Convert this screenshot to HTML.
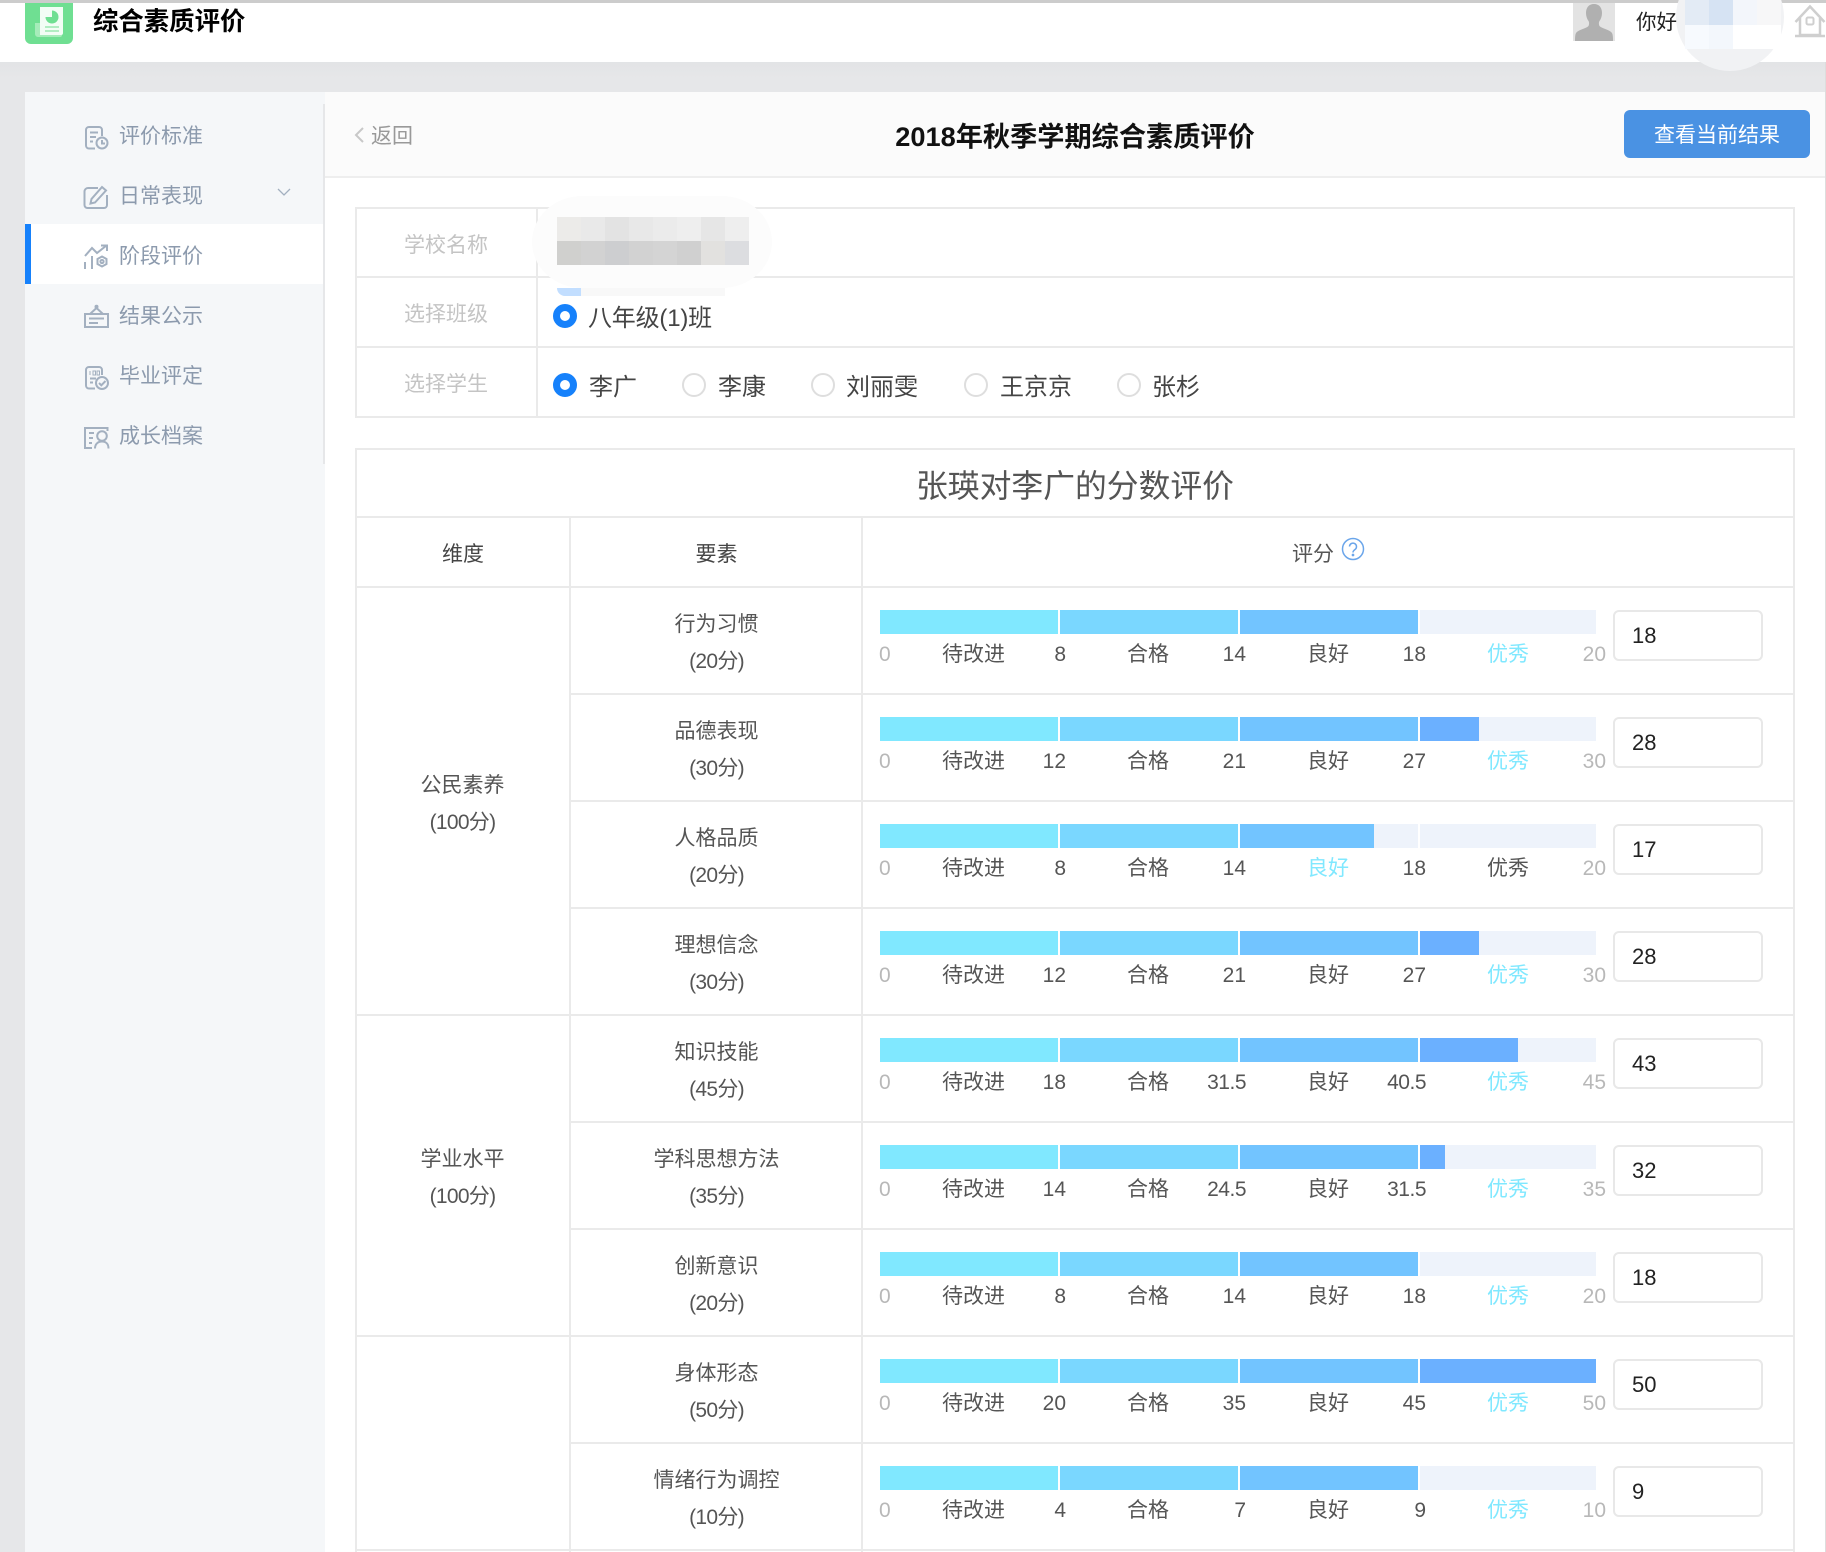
<!DOCTYPE html>
<html lang="zh-CN"><head><meta charset="utf-8"><title>综合素质评价</title>
<style>
*{margin:0;padding:0;box-sizing:border-box}
html,body{width:1826px;height:1552px;overflow:hidden}
body{position:relative;background:#e6e7e9;font-family:"Liberation Sans","Noto Sans CJK SC",sans-serif;font-size:21px;color:#555}
div,span,svg,p,i{position:absolute;display:block}
.t{white-space:nowrap;line-height:30px;height:30px}
.g{background:#eaeaea}
.sb{left:119px;color:#8c9aad;width:90px}
.lb{left:355px;width:182px;text-align:center;color:#c4c4c4}
.rt{color:#444;font-size:24px;line-height:34px;height:34px;white-space:nowrap}
.rd{width:24px;height:24px;border-radius:50%;border:2px solid #dedede;background:#fff}
.rd.on{border:7px solid #1681fb}
.r{left:355px;top:0;width:1440px;height:107px}
.e{left:215px;width:293px;text-align:center;line-height:37px;top:19px;color:#555;letter-spacing:-.7px}
.e::first-line,.dm::first-line{letter-spacing:0}
.dm{left:355px;width:215px;text-align:center;line-height:37px;letter-spacing:-.7px}
.s{top:23px;height:24px;background:#eef3fb}
.s1{left:525px;width:178px}.s2{left:705px;width:178px}.s3{left:885px;width:178px}.s4{left:1065px;width:176px}
.f{left:0;top:0;height:24px}
.c1{background:#80e8ff}.c2{background:#7ad7ff}.c3{background:#72c4ff}.c4{background:#6bb0ff}
.l{top:53px;height:30px;line-height:30px;white-space:nowrap;color:#555}
.n0{left:524px;color:#b8b8b8}
.a{left:587px}.b{left:772px}.c{left:952px}.d{left:1132px;color:#80e8ff}
.d.k{color:#555}.c.h{color:#80e8ff}
.x1,.x2,.x3,.x4{text-align:right;width:60px}
.x1{left:651px}.x2{left:831px}.x3{left:1011px}.x4{left:1191px;color:#b8b8b8}
.in{left:1258px;top:23px;width:150px;height:51px;border:2px solid #e8e8e8;border-radius:6px;background:#fff;color:#222;font-size:22px;line-height:47px;padding-left:17px}
.m{top:217px;width:24px;height:24px}
.m2{top:241px;width:24px;height:24px}
</style></head><body>

<!-- header -->
<div style="left:0;top:0;width:1826px;height:78px;background:linear-gradient(#d4d5d8,#e6e7e9)"></div>
<div style="left:0;top:0;width:1826px;height:62px;background:#fff;border-top:3px solid #ccc"></div>
<svg style="left:25px;top:3px" width="48" height="41" viewBox="0 0 48 41"><path d="M0 0H48V35a6 6 0 0 1-6 6H6a6 6 0 0 1-6-6Z" fill="#6fdf92"/><path d="M10 20h5V32h22a2 2 0 0 1-2 2H13a3 3 0 0 1-3-3Z" fill="#a6ecba"/><path d="M15 4H38V30a2 2 0 0 1-2 2H15Z" fill="#f2fdf5"/><circle cx="27" cy="14" r="6.500" fill="#6fdf92"/><path d="M27 14V7a7 7 0 0 0-7 7Z" fill="#f2fdf5"/><path d="M20 24H34M20 28H34" stroke="#9be8b2" stroke-width="1.500"/></svg>
<div class="t" style="left:93px;top:7px;font-size:25.400px;font-weight:700;color:#000">综合素质评价</div>
<div style="left:1676px;top:-37px;width:108px;height:108px;border-radius:50%;background:#f1f2f4"></div>
<div style="left:1685px;top:0;width:24px;height:25px;background:#e3ebf5"></div>
<div style="left:1709px;top:0;width:24px;height:25px;background:#d6e3f3"></div>
<div style="left:1733px;top:0;width:24px;height:25px;background:#f3f6fb"></div>
<div style="left:1757px;top:0;width:24px;height:25px;background:#f7f7f8"></div>
<div style="left:1685px;top:25px;width:24px;height:24px;background:#f7fafe"></div>
<div style="left:1709px;top:25px;width:24px;height:24px;background:#f3f7fc"></div>
<div style="left:1733px;top:25px;width:48px;height:24px;background:#fff"></div>
<svg style="left:1573px;top:3px" width="42" height="38" viewBox="0 0 42 38"><rect width="42" height="38" fill="#e3e3e3"/><path d="M21 1c-5.500 0-8 4-8 9 0 3 1 6 2.500 8 .8 1 .8 3.500 0 5-2 2.500-10 3.500-12.500 7C2 32 2 35 2 38H40c0-3 0-6-1-8-2.500-3.500-10.500-4.500-12.500-7-.8-1.500-.8-4 0-5C28 16 29 13 29 10c0-5-2.500-9-8-9Z" fill="#b0b0b0"/></svg>
<div class="t" style="left:1636px;top:8px;font-size:20.500px;color:#222">你好</div>
<svg style="left:1794px;top:3px" width="32" height="35" viewBox="0 0 32 35" fill="none" stroke="#cfcfcf" stroke-width="2.500"><path d="M1.500 19L16 3.500 30.500 19"/><path d="M6 15V32H26V15"/><path d="M1 33H31"/><rect x="12.500" y="14.500" width="7" height="7" rx="1.500" stroke-width="2"/></svg>

<!-- sidebar -->
<div style="left:25px;top:92px;width:300px;height:1460px;background:#f5f7f9"></div>
<div style="left:25px;top:224px;width:298px;height:60px;background:#fff"></div>
<div style="left:25px;top:224px;width:6px;height:60px;background:#1681fb"></div>
<div style="left:323px;top:104px;width:2px;height:360px;background:#e6e7e9"></div>

<svg style="left:82px;top:123px" width="30" height="30" viewBox="0 0 30 30" fill="none" stroke="#a3b0c0" stroke-width="2"><path d="M13 25.500H7A3 3 0 0 1 4 22.500V7A3 3 0 0 1 7 4H17A3 3 0 0 1 20 7V13"/><path d="M8 9.500H16M8 14H14M8 18.500H11"/><circle cx="20" cy="20" r="5.500"/><path d="M20 17V20.500H23"/></svg>
<div class="t sb" style="top:122px">评价标准</div>
<svg style="left:82px;top:183px" width="30" height="30" viewBox="0 0 30 30" fill="none" stroke="#a3b0c0" stroke-width="2"><path d="M16 5H6A3.500 3.500 0 0 0 2.500 8.500V22a3 3 0 0 0 3 3H22a3 3 0 0 0 3-3V12"/><path d="M8.500 20.500L9.500 16 20 4l4 3.500L13 19.500Z"/></svg>
<div class="t sb" style="top:182px">日常表现</div>
<svg style="left:275px;top:186px" width="18" height="12" viewBox="0 0 18 12" fill="none" stroke="#a3b0c0" stroke-width="1.300"><path d="M3 3L9 9 15 3"/></svg>

<svg style="left:82px;top:243px" width="30" height="28" viewBox="0 0 30 28" fill="none" stroke="#a3b0c0" stroke-width="2"><path d="M3 13L10 5 15 10 24.500 2.500"/><path d="M19 2.500H25V8"/><path d="M3 19V26M10 13V26"/><path d="M20 13.500l4.500 2.500v5l-4.500 2.500-4.500-2.500v-5Z"/><circle cx="20" cy="18.500" r="1.600"/></svg>
<div class="t sb" style="top:242px">阶段评价</div>
<svg style="left:82px;top:303px" width="30" height="28" viewBox="0 0 30 28" fill="none" stroke="#a3b0c0" stroke-width="2"><path d="M3 11H26V24H3Z"/><path d="M8 11L14.500 5 21 11"/><circle cx="14.500" cy="3.800" r="1"/><path d="M7 15.500H22M7 20H16"/></svg>
<div class="t sb" style="top:302px">结果公示</div>
<svg style="left:82px;top:363px" width="30" height="30" viewBox="0 0 30 30" fill="none" stroke="#a3b0c0" stroke-width="2"><path d="M13 25.500H7A3 3 0 0 1 4 22.500V7A3 3 0 0 1 7 4H17A3 3 0 0 1 20 7V12"/><path d="M8 8V12M11 8H13.500V12H11ZM15 8H17.500V12H15Z" stroke-width="1"/><path d="M8 15.500H14M8 19.500H11"/><circle cx="20" cy="20" r="6"/><path d="M17 20l2.300 2.300L23.500 18"/></svg>
<div class="t sb" style="top:362px">毕业评定</div>
<svg style="left:82px;top:423px" width="30" height="28" viewBox="0 0 30 28" fill="none" stroke="#a3b0c0" stroke-width="2"><path d="M10 25H3V5H25.500V8"/><path d="M7 10H12M7 15H11M7 20H10"/><circle cx="20" cy="13" r="4.800"/><path d="M13 25.500c0-4.500 3-7 7-7s6.500 2.500 6.500 7"/></svg>
<div class="t sb" style="top:422px">成长档案</div>

<!-- main -->
<div style="left:325px;top:92px;width:1500px;height:1460px;background:#fff"></div>
<div style="left:325px;top:92px;width:1500px;height:84px;background:#fbfbfb"></div>
<div style="left:325px;top:176px;width:1500px;height:2px;background:#eee"></div>
<div style="left:1825px;top:62px;width:1px;height:1490px;background:#ddd"></div>
<svg style="left:354px;top:126px" width="12" height="18" viewBox="0 0 12 18" fill="none" stroke="#c8c8c8" stroke-width="2"><path d="M9 2L2 9l7 7"/></svg>
<div class="t" style="left:371px;top:122px;color:#999">返回</div>
<div class="t" style="left:895px;top:122px;font-size:27.200px;font-weight:700;color:#111;width:360px;text-align:center">2018年秋季学期综合素质评价</div>
<div style="left:1624px;top:110px;width:186px;height:48px;background:#4a92e3;border-radius:6px;color:#fff;text-align:center;line-height:52px">查看当前结果</div>

<!-- info table -->
<div class="g" style="left:355px;top:207px;width:1440px;height:2px"></div>
<div class="g" style="left:355px;top:276px;width:1440px;height:2px"></div>
<div class="g" style="left:355px;top:346px;width:1440px;height:2px"></div>
<div class="g" style="left:355px;top:416px;width:1440px;height:2px"></div>
<div class="g" style="left:355px;top:207px;width:2px;height:211px"></div>
<div class="g" style="left:536px;top:207px;width:2px;height:211px"></div>
<div class="g" style="left:1793px;top:207px;width:2px;height:211px"></div>
<div class="t lb" style="top:231px">学校名称</div>
<div class="t lb" style="top:300px">选择班级</div>
<div class="t lb" style="top:370px">选择学生</div>
<div class="rd on" style="left:553px;top:304px"></div>
<div style="left:532px;top:196px;width:240px;height:92px;border-radius:50px/46px;background:#fcfcfc"></div>
<div style="left:557px;top:288px;width:24px;height:8px;background:#c2deff;border-radius:0 0 0 14px"></div>
<div style="left:581px;top:288px;width:144px;height:8px;background:#f8f8f8"></div>
<div class="m" style="left:557px;background:#ecebe9"></div><div class="m" style="left:581px;background:#e9e9e9"></div><div class="m" style="left:605px;background:#e3e3e3"></div><div class="m" style="left:629px;background:#e8e8e8"></div><div class="m" style="left:653px;background:#ebebeb"></div><div class="m" style="left:677px;background:#eeeeee"></div><div class="m" style="left:701px;background:#e6e6e6"></div><div class="m" style="left:725px;background:#eeeeee"></div>
<div class="m2" style="left:557px;background:#d0d0ce"></div><div class="m2" style="left:581px;background:#d2d2d2"></div><div class="m2" style="left:605px;background:#cdced0"></div><div class="m2" style="left:629px;background:#d2d2d2"></div><div class="m2" style="left:653px;background:#d4d4d4"></div><div class="m2" style="left:677px;background:#d0d0d0"></div><div class="m2" style="left:701px;background:#e2e1df"></div><div class="m2" style="left:725px;background:#dcdde0"></div>
<div class="rt" style="left:588px;top:302px;letter-spacing:-.2px">八年级(1)班</div>
<div class="rd on" style="left:553px;top:373px"></div><div class="rt" style="left:589px;top:371px">李广</div>
<div class="rd" style="left:682px;top:373px"></div><div class="rt" style="left:718px;top:371px">李康</div>
<div class="rd" style="left:811px;top:373px"></div><div class="rt" style="left:846px;top:371px">刘丽雯</div>
<div class="rd" style="left:964px;top:373px"></div><div class="rt" style="left:1000px;top:371px">王京京</div>
<div class="rd" style="left:1117px;top:373px"></div><div class="rt" style="left:1152px;top:371px">张杉</div>

<!-- score table lines -->
<div class="g" style="left:355px;top:448px;width:1440px;height:2px"></div>
<div class="g" style="left:355px;top:516px;width:1440px;height:2px"></div>
<div class="g" style="left:355px;top:586px;width:1440px;height:2px"></div>
<div class="g" style="left:569px;top:693px;width:1226px;height:2px"></div>
<div class="g" style="left:569px;top:800px;width:1226px;height:2px"></div>
<div class="g" style="left:569px;top:907px;width:1226px;height:2px"></div>
<div class="g" style="left:355px;top:1014px;width:1440px;height:2px"></div>
<div class="g" style="left:569px;top:1121px;width:1226px;height:2px"></div>
<div class="g" style="left:569px;top:1228px;width:1226px;height:2px"></div>
<div class="g" style="left:355px;top:1335px;width:1440px;height:2px"></div>
<div class="g" style="left:569px;top:1442px;width:1226px;height:2px"></div>
<div class="g" style="left:355px;top:1549px;width:1440px;height:2px"></div>
<div class="g" style="left:355px;top:448px;width:2px;height:1104px"></div>
<div class="g" style="left:569px;top:516px;width:2px;height:1036px"></div>
<div class="g" style="left:861px;top:516px;width:2px;height:1036px"></div>
<div class="g" style="left:1793px;top:448px;width:2px;height:1104px"></div>

<div class="t" style="left:355px;top:466px;width:1440px;height:40px;line-height:40px;text-align:center;font-size:31.800px;color:#555">张瑛对李广的分数评价</div>
<div class="t" style="left:356px;top:540px;width:214px;text-align:center;color:#444">维度</div>
<div class="t" style="left:570px;top:540px;width:293px;text-align:center;color:#444">要素</div>
<div class="t" style="left:1292px;top:540px;color:#555">评分</div>
<svg style="left:1341px;top:537px" width="24" height="24" viewBox="0 0 24 24" fill="none" stroke="#6aa5ea" stroke-width="1.500"><circle cx="12" cy="12" r="10.500"/><path d="M8.500 9.500a3.500 3.500 0 1 1 5.500 3c-1.300.9-2 1.500-2 3"/><circle cx="12" cy="18" r=".6"/></svg>
<p class="dm" style="top:767px">公民素养<br>(100分)</p>
<p class="dm" style="top:1141px">学业水平<br>(100分)</p>

<!-- rows -->
<div class="r" style="top:587px"><p class="e">行为习惯<br>(20分)</p>
<div class="s s1"><i class="f c1" style="width:178px"></i></div><div class="s s2"><i class="f c2" style="width:178px"></i></div><div class="s s3"><i class="f c3" style="width:178px"></i></div><div class="s s4"></div>
<span class="l n0">0</span><span class="l a">待改进</span><span class="l x1">8</span><span class="l b">合格</span><span class="l x2">14</span><span class="l c">良好</span><span class="l x3">18</span><span class="l d">优秀</span><span class="l x4">20</span><div class="in">18</div></div>

<div class="r" style="top:694px"><p class="e">品德表现<br>(30分)</p>
<div class="s s1"><i class="f c1" style="width:178px"></i></div><div class="s s2"><i class="f c2" style="width:178px"></i></div><div class="s s3"><i class="f c3" style="width:178px"></i></div><div class="s s4"><i class="f c4" style="width:59px"></i></div>
<span class="l n0">0</span><span class="l a">待改进</span><span class="l x1">12</span><span class="l b">合格</span><span class="l x2">21</span><span class="l c">良好</span><span class="l x3">27</span><span class="l d">优秀</span><span class="l x4">30</span><div class="in">28</div></div>

<div class="r" style="top:801px"><p class="e">人格品质<br>(20分)</p>
<div class="s s1"><i class="f c1" style="width:178px"></i></div><div class="s s2"><i class="f c2" style="width:178px"></i></div><div class="s s3"><i class="f c3" style="width:134px"></i></div><div class="s s4"></div>
<span class="l n0">0</span><span class="l a">待改进</span><span class="l x1">8</span><span class="l b">合格</span><span class="l x2">14</span><span class="l c h">良好</span><span class="l x3">18</span><span class="l d k">优秀</span><span class="l x4">20</span><div class="in">17</div></div>

<div class="r" style="top:908px"><p class="e">理想信念<br>(30分)</p>
<div class="s s1"><i class="f c1" style="width:178px"></i></div><div class="s s2"><i class="f c2" style="width:178px"></i></div><div class="s s3"><i class="f c3" style="width:178px"></i></div><div class="s s4"><i class="f c4" style="width:59px"></i></div>
<span class="l n0">0</span><span class="l a">待改进</span><span class="l x1">12</span><span class="l b">合格</span><span class="l x2">21</span><span class="l c">良好</span><span class="l x3">27</span><span class="l d">优秀</span><span class="l x4">30</span><div class="in">28</div></div>

<div class="r" style="top:1015px"><p class="e">知识技能<br>(45分)</p>
<div class="s s1"><i class="f c1" style="width:178px"></i></div><div class="s s2"><i class="f c2" style="width:178px"></i></div><div class="s s3"><i class="f c3" style="width:178px"></i></div><div class="s s4"><i class="f c4" style="width:98px"></i></div>
<span class="l n0">0</span><span class="l a">待改进</span><span class="l x1">18</span><span class="l b">合格</span><span class="l x2" style="letter-spacing:-.5px">31.5</span><span class="l c">良好</span><span class="l x3" style="letter-spacing:-.5px">40.5</span><span class="l d">优秀</span><span class="l x4">45</span><div class="in">43</div></div>

<div class="r" style="top:1122px"><p class="e">学科思想方法<br>(35分)</p>
<div class="s s1"><i class="f c1" style="width:178px"></i></div><div class="s s2"><i class="f c2" style="width:178px"></i></div><div class="s s3"><i class="f c3" style="width:178px"></i></div><div class="s s4"><i class="f c4" style="width:25px"></i></div>
<span class="l n0">0</span><span class="l a">待改进</span><span class="l x1">14</span><span class="l b">合格</span><span class="l x2" style="letter-spacing:-.5px">24.5</span><span class="l c">良好</span><span class="l x3" style="letter-spacing:-.5px">31.5</span><span class="l d">优秀</span><span class="l x4">35</span><div class="in">32</div></div>

<div class="r" style="top:1229px"><p class="e">创新意识<br>(20分)</p>
<div class="s s1"><i class="f c1" style="width:178px"></i></div><div class="s s2"><i class="f c2" style="width:178px"></i></div><div class="s s3"><i class="f c3" style="width:178px"></i></div><div class="s s4"></div>
<span class="l n0">0</span><span class="l a">待改进</span><span class="l x1">8</span><span class="l b">合格</span><span class="l x2">14</span><span class="l c">良好</span><span class="l x3">18</span><span class="l d">优秀</span><span class="l x4">20</span><div class="in">18</div></div>

<div class="r" style="top:1336px"><p class="e">身体形态<br>(50分)</p>
<div class="s s1"><i class="f c1" style="width:178px"></i></div><div class="s s2"><i class="f c2" style="width:178px"></i></div><div class="s s3"><i class="f c3" style="width:178px"></i></div><div class="s s4"><i class="f c4" style="width:176px"></i></div>
<span class="l n0">0</span><span class="l a">待改进</span><span class="l x1">20</span><span class="l b">合格</span><span class="l x2">35</span><span class="l c">良好</span><span class="l x3">45</span><span class="l d">优秀</span><span class="l x4">50</span><div class="in">50</div></div>

<div class="r" style="top:1443px"><p class="e">情绪行为调控<br>(10分)</p>
<div class="s s1"><i class="f c1" style="width:178px"></i></div><div class="s s2"><i class="f c2" style="width:178px"></i></div><div class="s s3"><i class="f c3" style="width:178px"></i></div><div class="s s4"></div>
<span class="l n0">0</span><span class="l a">待改进</span><span class="l x1">4</span><span class="l b">合格</span><span class="l x2">7</span><span class="l c">良好</span><span class="l x3">9</span><span class="l d">优秀</span><span class="l x4">10</span><div class="in">9</div></div>

</body></html>
